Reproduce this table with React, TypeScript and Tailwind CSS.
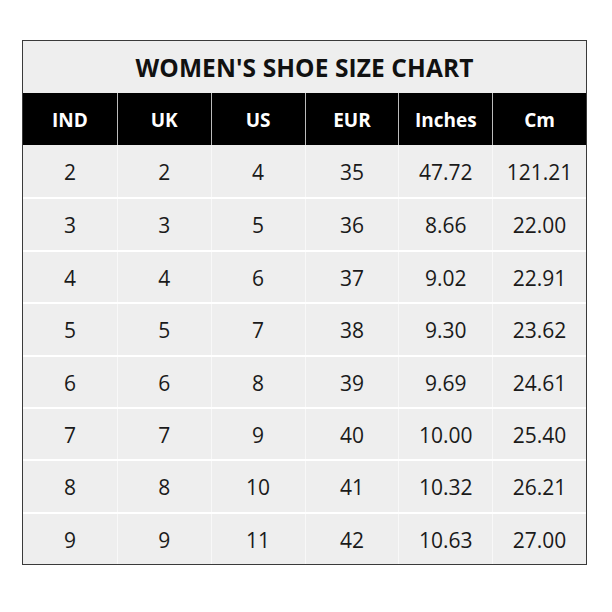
import React from 'react';

const headers = ['IND', 'UK', 'US', 'EUR', 'Inches', 'Cm'];

const rows = [
  ['2', '2', '4', '35', '47.72', '121.21'],
  ['3', '3', '5', '36', '8.66', '22.00'],
  ['4', '4', '6', '37', '9.02', '22.91'],
  ['5', '5', '7', '38', '9.30', '23.62'],
  ['6', '6', '8', '39', '9.69', '24.61'],
  ['7', '7', '9', '40', '10.00', '25.40'],
  ['8', '8', '10', '41', '10.32', '26.21'],
  ['9', '9', '11', '42', '10.63', '27.00'],
];

export default function App() {
  return (
    <div className="w-[612px] h-[612px] bg-white pt-[40px] pl-[22px]" style={{ fontFamily: '"Open Sans", "Noto Sans", sans-serif' }}>
      <div className="w-[565px] border border-[#3a3a3a] bg-[#eeeeee]">
        <div className="h-[52px] flex items-center justify-center pt-[2px] text-[24.5px] font-bold text-[#111] tracking-[0.1px]">
          WOMEN'S SHOE SIZE CHART
        </div>
        <div className="grid grid-cols-6 h-[52px] bg-black">
          {headers.map((h, i) => (
            <div
              key={h}
              className={`flex items-center justify-center pt-[3px] text-white font-bold text-[19px] ${i > 0 ? 'border-l border-[#bbbbbb]' : ''}`}
            >
              {h}
            </div>
          ))}
        </div>
        {rows.map((row, r) => (
          <div key={r} className={`grid grid-cols-6 h-[52.4px] ${r > 0 ? 'border-t-2 border-white' : ''}`}>
            {row.map((c, i) => (
              <div
                key={i}
                className={`flex items-center justify-center pt-[3px] text-[#1a1a1a] text-[21px] ${i > 0 ? 'border-l border-[#f8f8f8]' : ''}`}
              >
                {c}
              </div>
            ))}
          </div>
        ))}
      </div>
    </div>
  );
}
